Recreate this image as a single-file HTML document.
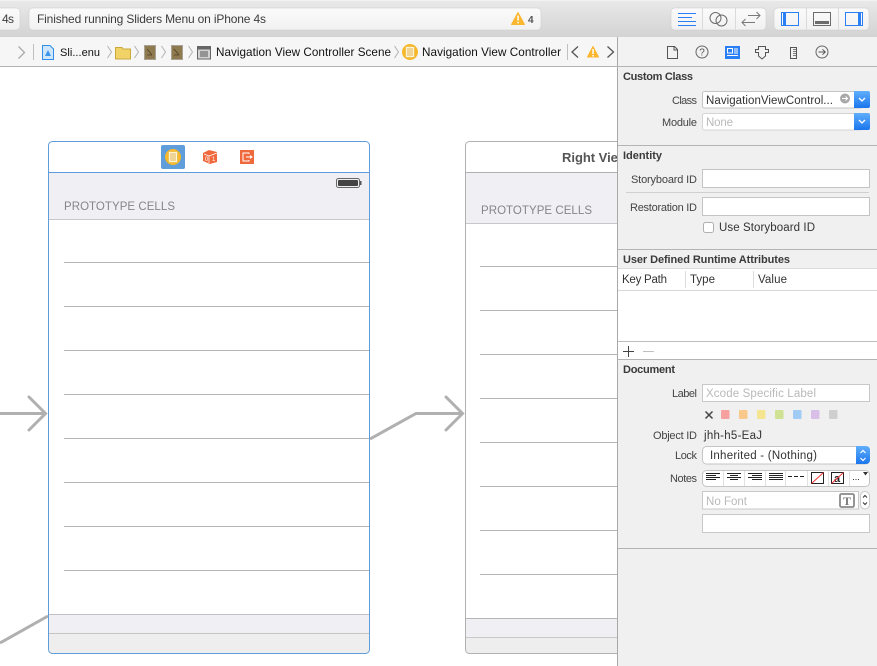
<!DOCTYPE html>
<html><head><meta charset="utf-8">
<style>
html,body{margin:0;padding:0;background:#fff;overflow:hidden}
svg{display:block}
text{font-family:"Liberation Sans",sans-serif;font-size:11px;fill:#2b2b2b}
.b{font-weight:bold;fill:#3a3a3a}
.l{fill:#444}
.v{fill:#333;font-size:11.5px}
.t{fill:#3c3c3c;font-size:12px}
.j{fill:#111;font-size:11.7px}
.p{fill:#b9b9b9;font-size:11.5px}
.h{font-size:11.5px;fill:#85858a}
</style></head><body>
<svg width="877" height="666" viewBox="0 0 877 666" xmlns="http://www.w3.org/2000/svg">
<defs>
<linearGradient id="tb" x1="0" y1="0" x2="0" y2="1"><stop offset="0" stop-color="#e9e9e9"/><stop offset="1" stop-color="#d3d3d3"/></linearGradient>
<linearGradient id="btn" x1="0" y1="0" x2="0" y2="1"><stop offset="0" stop-color="#fbfbfb"/><stop offset="1" stop-color="#f1f1f1"/></linearGradient>
<linearGradient id="blue" x1="0" y1="0" x2="0" y2="1"><stop offset="0" stop-color="#60aefb"/><stop offset="1" stop-color="#1b76ee"/></linearGradient>
<clipPath id="c2"><rect x="460" y="130" width="157" height="530"/></clipPath>
</defs>

<!-- canvas -->
<rect width="877" height="666" fill="#fff"/>

<!-- segues -->
<g fill="none" stroke="#b0b0b0" stroke-width="3">
<path d="M0 413.5H45"/>
<path d="M29 397L45.500 413.500L29 430" stroke-linecap="round"/>
<path d="M370 439L416 413.500H462"/>
<path d="M446 397L462.500 413.500L446 430" stroke-linecap="round"/>
<path d="M0 643L48 616"/>
</g>

<!-- scene 1 -->
<rect x="48.500" y="141.500" width="321" height="512" rx="5" fill="#fff"/>
<rect x="49" y="172" width="320" height="47" fill="#efeff4"/>
<rect x="49" y="219" width="320" height="1" fill="#c8c7cc"/>
<g fill="#b5b5b8">
<rect x="64" y="262" width="305" height="1"/><rect x="64" y="306" width="305" height="1"/><rect x="64" y="350" width="305" height="1"/><rect x="64" y="394" width="305" height="1"/><rect x="64" y="438" width="305" height="1"/><rect x="64" y="482" width="305" height="1"/><rect x="64" y="526" width="305" height="1"/><rect x="64" y="570" width="305" height="1"/>
</g>
<rect x="49" y="614" width="320" height="19" fill="#efeff4"/>
<rect x="49" y="614" width="320" height="1" fill="#c0c0c6"/>
<rect x="49" y="633" width="320" height="20" fill="#eeeeee"/>
<rect x="49" y="633" width="320" height="1" fill="#c4c4c4"/>
<rect x="48" y="172" width="322" height="1" fill="#5e9ddb"/>
<rect x="48.500" y="141.500" width="321" height="512" rx="4" fill="none" stroke="#5e9ddb"/>
<text class="h" x="64" y="210" textLength="111" lengthAdjust="spacing">PROTOTYPE CELLS</text>
<rect x="161" y="145" width="24" height="24" rx="2" fill="#5f9ddb"/>
<circle cx="173" cy="157" r="8" fill="#f7b92a"/>
<rect x="168.500" y="151.500" width="9" height="11" fill="#fdf4d4" stroke="#e6a920" stroke-width=".5"/>
<path d="M170 154h6M170 156h6M170 158h6M170 160h6" stroke="#d9a030" stroke-width=".8"/>
<path d="M203 153L209 150L217 152V162L210 164L203 161Z" fill="#f0693c"/>
<path d="M204 154L209 156V163M209 156L217 153" stroke="#fff" stroke-width=".7" fill="none"/>
<text x="205" y="161" style="font-size:6px;fill:#fff">0</text><text x="212" y="161" style="font-size:6px;fill:#fff">1</text>
<rect x="240" y="150" width="14" height="14" fill="#f0693c"/>
<path d="M249 154V153H243V161H249V160M246 157H252M250 155.500L252 157L250 158.500" stroke="#fff" fill="none"/>
<rect x="336.500" y="178.500" width="23" height="9" rx="2" fill="none" stroke="#666"/>
<rect x="338" y="180" width="20" height="6" rx="1" fill="#444"/>
<rect x="360" y="181" width="1.500" height="4" fill="#555"/>

<!-- scene 2 -->
<g clip-path="url(#c2)">
<rect x="465.500" y="141.500" width="321" height="512" rx="5" fill="#fff"/>
<rect x="466" y="172" width="320" height="51" fill="#efeff4"/>
<rect x="466" y="172" width="320" height="1" fill="#b0b0b0"/>
<rect x="466" y="223" width="320" height="1" fill="#c8c7cc"/>
<g fill="#b5b5b8">
<rect x="480" y="266" width="305" height="1"/><rect x="480" y="310" width="305" height="1"/><rect x="480" y="354" width="305" height="1"/><rect x="480" y="398" width="305" height="1"/><rect x="480" y="442" width="305" height="1"/><rect x="480" y="486" width="305" height="1"/><rect x="480" y="530" width="305" height="1"/><rect x="480" y="574" width="305" height="1"/>
</g>
<rect x="466" y="618" width="320" height="19" fill="#efeff4"/>
<rect x="466" y="618" width="320" height="1" fill="#b5b5b8"/>
<rect x="466" y="637" width="320" height="16" fill="#eeeeee"/>
<rect x="466" y="637" width="320" height="1" fill="#c8c8c8"/>
<rect x="465.500" y="141.500" width="321" height="512" rx="4" fill="none" stroke="#b0b0b0"/>
<text class="h" x="481" y="214" textLength="111" lengthAdjust="spacing">PROTOTYPE CELLS</text>
<text x="562" y="162" style="font-weight:bold;font-size:13px;fill:#555" textLength="66" lengthAdjust="spacing">Right View</text>
</g>

<!-- inspector bg -->
<rect x="617" y="37" width="260" height="629" fill="#f0f0f0"/>
<rect x="617" y="37" width="1" height="629" fill="#a8a8a8"/>

<!-- toolbar -->
<rect width="877" height="37" fill="url(#tb)"/>
<rect y="0" width="877" height="1" fill="#f2f2f2"/>
<rect x="-4" y="8" width="24" height="22" rx="4" fill="url(#btn)" stroke="#c9c9c9" stroke-width=".5"/>
<text class="t" x="2" y="23" textLength="12" lengthAdjust="spacing">4s</text>
<rect x="29" y="8" width="512" height="22" rx="4" fill="url(#btn)" stroke="#c9c9c9" stroke-width=".5"/>
<text class="t" x="37" y="23" textLength="229" lengthAdjust="spacing">Finished running Sliders Menu on iPhone 4s</text>
<path d="M518 12.500L524.500 24.500H511.500Z" fill="#fbb62f" stroke="#fbb62f" stroke-linejoin="round"/>
<rect x="517.300" y="15.500" width="1.500" height="5" fill="#fff"/><rect x="517.300" y="21.800" width="1.500" height="1.500" fill="#fff"/>
<text x="528" y="23" style="font-size:10px;font-weight:bold;fill:#555">4</text>

<rect x="671" y="8" width="95" height="22" rx="4" fill="url(#btn)" stroke="#c9c9c9" stroke-width=".5"/>
<rect x="702" y="8" width="1" height="22" fill="#dadada"/><rect x="735" y="8" width="1" height="22" fill="#dadada"/>
<g fill="#2a7ff5"><rect x="678" y="13" width="18" height="1"/><rect x="678" y="17" width="14" height="1"/><rect x="678" y="21" width="18" height="1"/><rect x="678" y="25" width="18" height="1"/></g>
<circle cx="715.500" cy="18" r="5.500" fill="none" stroke="#6c6c6c"/><circle cx="721.500" cy="20.500" r="5.500" fill="none" stroke="#6c6c6c"/>
<path d="M748 15.500H760M756.500 12L760 15.500L756.500 19M742 22.500H755M745.500 19L742 22.500L745.500 26" fill="none" stroke="#7a7a7a"/>

<rect x="774" y="8" width="95" height="22" rx="4" fill="url(#btn)" stroke="#c9c9c9" stroke-width=".5"/>
<rect x="806" y="8" width="1" height="22" fill="#dadada"/><rect x="838" y="8" width="1" height="22" fill="#dadada"/>
<rect x="781.500" y="12.500" width="17" height="13" fill="none" stroke="#2a7ff5"/><rect x="783" y="13" width="3" height="12" fill="#2a7ff5"/>
<rect x="813.500" y="12.500" width="17" height="13" fill="none" stroke="#6c6c6c"/><rect x="815" y="21" width="14" height="3" fill="#6c6c6c"/>
<rect x="845.500" y="12.500" width="17" height="13" fill="none" stroke="#2a7ff5"/><rect x="858" y="13" width="3" height="12" fill="#2a7ff5"/>

<!-- jump bar -->
<rect x="0" y="37" width="617" height="29" fill="#f6f6f6"/>
<rect x="618" y="37" width="259" height="29" fill="#f2f2f2"/>
<rect x="0" y="66" width="877" height="1" fill="#b4b4b4"/>
<rect x="617" y="37" width="1" height="29" fill="#a8a8a8"/>
<path d="M18.500 46.500L24.500 52.500L18.500 58.500" fill="none" stroke="#aaa" stroke-width="1.300"/>
<rect x="33" y="44" width="1" height="16" fill="#c0c0c0"/>
<path d="M42.500 45.500H50L53.500 49V59.500H42.500Z" fill="#cfe6fb" stroke="#2f8fe8"/>
<path d="M45 56L48 50L51 56Z" fill="#3b97ee"/>
<text class="j" x="60" y="56" textLength="40" lengthAdjust="spacing" style="font-size:11px">Sli...enu</text>
<g fill="none" stroke="#b2b2b2">
<path d="M107.500 46L111.500 52L107.500 58"/><path d="M134.500 46L138.500 52L134.500 58"/><path d="M161.500 46L165.500 52L161.500 58"/><path d="M188.500 46L192.500 52L188.500 58"/><path d="M394.500 46L398.500 52L394.500 58"/>
</g>
<path d="M115.500 47.500H122L123 49H130.500V59H115.500Z" fill="#f0d266" stroke="#c9a93e"/>
<rect x="144" y="45" width="12" height="15" fill="#a9a294"/><rect x="145" y="46" width="10" height="13" fill="#8f7a50"/><path d="M147 49L152 55M147 55H152" stroke="#4e3f20" stroke-width=".8"/>
<rect x="171" y="45" width="12" height="15" fill="#a9a294"/><rect x="172" y="46" width="10" height="13" fill="#8f7a50"/><path d="M174 49L179 55M174 55H179" stroke="#4e3f20" stroke-width=".8"/>
<rect x="197.500" y="46.500" width="13" height="12.500" fill="#d2d2d2" stroke="#666"/>
<rect x="198" y="47" width="12" height="2.500" fill="#666"/>
<path d="M200 52h8M200 54h8M200 56h8" stroke="#555"/>
<text class="j" x="216" y="56" textLength="175" lengthAdjust="spacing">Navigation View Controller Scene</text>
<circle cx="410" cy="52" r="8" fill="#f7b92a"/>
<rect x="405.500" y="46.500" width="9" height="11" fill="#fdf4d4" stroke="#e6a920" stroke-width=".5"/>
<path d="M407 49h6M407 51h6M407 53h6M407 55h6" stroke="#d9a030" stroke-width=".8"/>
<text class="j" x="422" y="56" textLength="139" lengthAdjust="spacing">Navigation View Controller</text>
<rect x="567" y="44" width="1" height="16" fill="#c0c0c0"/>
<path d="M578 46.500L572 52L578 57.500" fill="none" stroke="#555" stroke-width="1.300"/>
<path d="M593 46.500L598.500 57H587.500Z" fill="#fbb62f" stroke="#fbb62f" stroke-linejoin="round"/>
<rect x="592.300" y="49" width="1.500" height="5" fill="#fff"/><rect x="592.300" y="55" width="1.500" height="1.500" fill="#fff"/>
<path d="M607.500 46.500L613.500 52L607.500 57.500" fill="none" stroke="#555" stroke-width="1.300"/>

<!-- inspector tabs -->
<path d="M667.500 46.500H674.500L677.500 49.500V58.500H667.500Z" fill="none" stroke="#555"/><path d="M674 46.500V50H677.500" fill="none" stroke="#555"/>
<circle cx="702" cy="52" r="6" fill="none" stroke="#666"/>
<text x="699.300" y="55.500" style="font-size:10px;fill:#555">?</text>
<rect x="725" y="46" width="15" height="13" fill="#2a7ff5"/>
<rect x="727.500" y="48.500" width="5" height="4.500" fill="#2a7ff5" stroke="#fff"/>
<path d="M734 49h4M734 51h4M734 53h4M727 55.500h11" stroke="#fff"/>
<path d="M758.500 46.500H765.500V49.500H768.500V52.500H765.500V56L762 59L758.500 56V52.500H755.500V49.500H758.500Z" fill="none" stroke="#555"/>
<rect x="790.500" y="47.500" width="6" height="11" fill="none" stroke="#555"/>
<path d="M793 49.500h3M793 51.500h3M793 53.500h3M793 55.500h3" stroke="#555" stroke-width=".8"/>
<circle cx="822" cy="52" r="6" fill="none" stroke="#666"/>
<path d="M818.500 52H825M822.500 49.300L825.300 52L822.500 54.700" fill="none" stroke="#555"/>

<!-- Custom Class -->
<text class="b" x="623" y="80" textLength="70" lengthAdjust="spacing">Custom Class</text>
<text class="l" x="672" y="104" textLength="25" lengthAdjust="spacing">Class</text>
<rect x="702.500" y="91.500" width="160" height="16.500" rx="2" fill="#fff" stroke="#c4c4c4"/>
<text class="v" x="706" y="104" textLength="127" lengthAdjust="spacing">NavigationViewControl...</text>
<circle cx="845" cy="98.500" r="5" fill="#a8a8a8"/><path d="M842 98.500H847M845.500 96.500L847.500 98.500L845.500 100.500" fill="none" stroke="#fff"/>
<path d="M854 91H868a2 2 0 0 1 2 2V106a2 2 0 0 1-2 2H854Z" fill="url(#blue)"/>
<path d="M859 98L862 101L865 98" fill="none" stroke="#fff" stroke-width="1.300"/>
<text class="l" x="662" y="126" textLength="35" lengthAdjust="spacing">Module</text>
<rect x="702.500" y="113.500" width="160" height="16.500" rx="2" fill="#fff" stroke="#d4d4d4"/>
<text class="p" x="706" y="126" textLength="27" lengthAdjust="spacing">None</text>
<path d="M854 113H868a2 2 0 0 1 2 2V128a2 2 0 0 1-2 2H854Z" fill="url(#blue)"/>
<path d="M859 120L862 123L865 120" fill="none" stroke="#fff" stroke-width="1.300"/>
<rect x="618" y="145" width="259" height="1" fill="#b4b4b4"/>

<!-- Identity -->
<text class="b" x="623" y="159" textLength="39" lengthAdjust="spacing">Identity</text>
<text class="l" x="631" y="183" textLength="66" lengthAdjust="spacing">Storyboard ID</text>
<rect x="702.500" y="169.500" width="167" height="18" fill="#fff" stroke="#c4c4c4"/>
<rect x="626" y="192" width="243" height="1" fill="#d0d0d0"/>
<text class="l" x="630" y="211" textLength="67" lengthAdjust="spacing">Restoration ID</text>
<rect x="702.500" y="197.500" width="167" height="18" fill="#fff" stroke="#c4c4c4"/>
<rect x="703.500" y="222.500" width="10" height="10" rx="2" fill="#fff" stroke="#b0b0b0"/>
<text class="v" x="719" y="231" textLength="96" lengthAdjust="spacing">Use Storyboard ID</text>
<rect x="618" y="249" width="259" height="1" fill="#b4b4b4"/>

<!-- Runtime attributes -->
<text class="b" x="623" y="263" textLength="167" lengthAdjust="spacing">User Defined Runtime Attributes</text>
<rect x="618" y="268" width="259" height="91" fill="#fff"/>
<rect x="618" y="268" width="259" height="1" fill="#dcdcdc"/>
<rect x="618" y="290" width="259" height="1" fill="#d8d8d8"/>
<rect x="685" y="271" width="1" height="17" fill="#dcdcdc"/><rect x="753" y="271" width="1" height="17" fill="#dcdcdc"/>
<text class="v" x="622" y="283" textLength="45" lengthAdjust="spacing">Key Path</text>
<text class="v" x="690" y="283" textLength="25" lengthAdjust="spacing">Type</text>
<text class="v" x="758" y="283" textLength="29" lengthAdjust="spacing">Value</text>
<rect x="618" y="341" width="259" height="1" fill="#bdbdbd"/>
<path d="M623 351.500H634M628.500 346V357" stroke="#444" fill="none"/>
<path d="M643 351.500H654" stroke="#c0c0c0" fill="none"/>
<rect x="618" y="359" width="259" height="1" fill="#b4b4b4"/>

<!-- Document -->
<text class="b" x="623" y="373" textLength="52" lengthAdjust="spacing">Document</text>
<text class="l" x="672" y="397" textLength="25" lengthAdjust="spacing">Label</text>
<rect x="702.500" y="384.500" width="167" height="17" fill="#fff" stroke="#c8c8c8"/>
<text class="p" x="706" y="397" textLength="110" lengthAdjust="spacing">Xcode Specific Label</text>
<path d="M705.500 411.500L712.500 418.500M712.500 411.500L705.500 418.500" stroke="#444" stroke-width="1.500"/>
<rect x="721" y="410" width="8.500" height="9" rx="1" fill="#f7a0a0"/>
<rect x="739" y="410" width="8.500" height="9" rx="1" fill="#f8c98a"/>
<rect x="757" y="410" width="8.500" height="9" rx="1" fill="#f5e590"/>
<rect x="775" y="410" width="8.500" height="9" rx="1" fill="#cfe293"/>
<rect x="793" y="410" width="8.500" height="9" rx="1" fill="#a0cbf5"/>
<rect x="811" y="410" width="8.500" height="9" rx="1" fill="#d9bfe8"/>
<rect x="829" y="410" width="8.500" height="9" rx="1" fill="#cfcfcf"/>
<text class="l" x="653" y="439" textLength="44" lengthAdjust="spacing">Object ID</text>
<text class="v" x="704" y="439" textLength="58" lengthAdjust="spacing">jhh-h5-EaJ</text>
<text class="l" x="675" y="459" textLength="22" lengthAdjust="spacing">Lock</text>
<rect x="702.500" y="446.500" width="167" height="17.500" rx="4" fill="#fff" stroke="#c4c4c4"/>
<text class="v" x="710" y="459" textLength="107" lengthAdjust="spacing">Inherited - (Nothing)</text>
<path d="M856 446H866a4 4 0 0 1 4 4V460a4 4 0 0 1-4 4H856Z" fill="url(#blue)"/>
<path d="M860.500 453L863 450.500L865.500 453M860.500 458L863 460.500L865.500 458" fill="none" stroke="#fff" stroke-width="1.200"/>
<text class="l" x="670" y="482" textLength="27" lengthAdjust="spacing">Notes</text>
<rect x="702.500" y="470.500" width="167" height="16" rx="4" fill="#fff" stroke="#c4c4c4"/>
<g fill="#e0e0e0"><rect x="723" y="471" width="1" height="15"/><rect x="744" y="471" width="1" height="15"/><rect x="765" y="471" width="1" height="15"/><rect x="785" y="471" width="1" height="15"/><rect x="807" y="471" width="1" height="15"/><rect x="828" y="471" width="1" height="15"/><rect x="849" y="471" width="1" height="15"/></g>
<path d="M706 473.500H720M706 475.500H716M706 477.500H720M706 479.500H716M727 473.500H741M730 475.500H738M727 477.500H741M730 479.500H738M748 473.500H762M752 475.500H762M748 477.500H762M752 479.500H762M769 473.500H783M769 475.500H783M769 477.500H783M769 479.500H783" stroke="#222" fill="none"/>
<path d="M788 476.500H792M794 476.500H798M800 476.500H804" stroke="#222" fill="none"/>
<rect x="811.500" y="472.500" width="12" height="11" fill="#fff" stroke="#222"/><path d="M811.500 483.500L823.500 472.500" stroke="#e33" fill="none"/>
<rect x="831.500" y="472.500" width="12" height="11" fill="#fff" stroke="#222"/><text x="834" y="482" style="font-size:11px;font-weight:bold;fill:#222">a</text><path d="M831.500 483.500L843.500 472.500" stroke="#e33" fill="none"/>
<path d="M853 479.500h1M855.500 479.500h1M858 479.500h1" stroke="#333" fill="none"/>
<path d="M863 472H868L865.500 475.500Z" fill="#333"/>
<rect x="702.500" y="491.500" width="156" height="17.500" fill="#fff" stroke="#c8c8c8"/>
<text class="p" x="706" y="505" textLength="41" lengthAdjust="spacing">No Font</text>
<rect x="840" y="494" width="14" height="13" rx="1.500" fill="#fff" stroke="#8a8a8a" stroke-width="1.800"/>
<text x="843" y="505" style="font-family:'Liberation Serif',serif;font-size:12px;font-weight:bold;fill:#777">T</text>
<rect x="860.500" y="491.500" width="9" height="17.500" rx="4.500" fill="#fff" stroke="#c8c8c8"/>
<path d="M863 497.500L865 495.500L867 497.500M863 502.500L865 504.500L867 502.500" fill="none" stroke="#333"/>
<rect x="702.500" y="514.500" width="167" height="18" fill="#fff" stroke="#c8c8c8"/>
<rect x="618" y="548" width="259" height="1" fill="#b4b4b4"/>
</svg>
</body></html>
